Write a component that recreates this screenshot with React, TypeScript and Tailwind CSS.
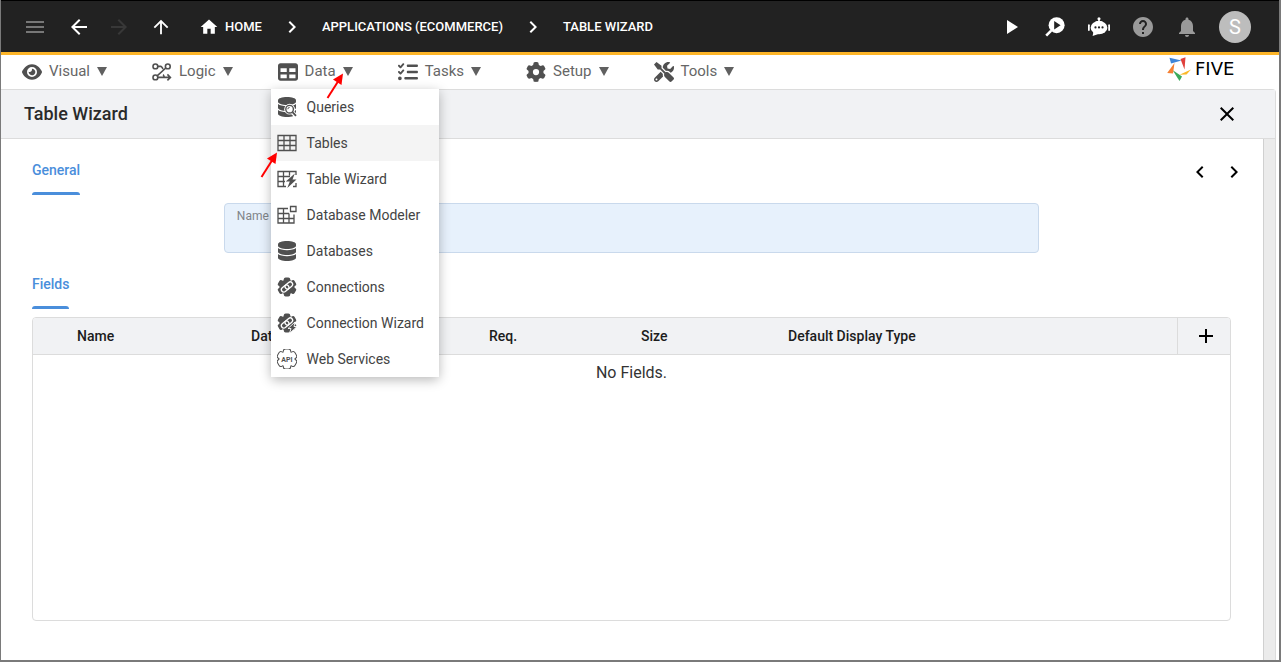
import React from "react";
import {
  MdAdd,
  MdArrowBack,
  MdArrowForward,
  MdArrowUpward,
  MdChevronLeft,
  MdChevronRight,
  MdClose,
  MdHelp,
  MdHome,
  MdMenu,
  MdNotifications,
  MdPlayArrow,
} from "react-icons/md";
import { FaEye, FaGear, FaListCheck, FaTable } from "react-icons/fa6";
import { FaTools } from "react-icons/fa";

const Icon = ({
  children,
  className = "size-5",
}: {
  children: React.ReactNode;
  className?: string;
}) => (
  <svg
    viewBox="0 0 20 20"
    className={`${className} shrink-0`}
    fill="none"
    stroke="currentColor"
    aria-hidden="true"
  >
    {children}
  </svg>
);

const LogicIcon = () => (
  <Icon>
    <g strokeWidth="1.6">
      <circle cx="3.4" cy="4.4" r="2.4" />
      <circle cx="15.8" cy="4.4" r="2.4" />
      <circle cx="3.4" cy="15.4" r="2.4" />
      <path d="M5.800 4.400h3c1.500 0 1.200 2.200 2.600 2.200M13.800 6l-8.400 7.600M5.800 15.400H18M11 12.600c1 .6.800 2.600 2 2.800M15.400 12.400l3 3-3 3" />
    </g>
  </Icon>
);

const RunSearchIcon = () => (
  <Icon>
    <circle cx="11.6" cy="8.2" r="8" fill="currentColor" stroke="none" />
    <path d="M6.200 13.600 1.200 18.600" strokeWidth="2.600" />
    <path d="M9.200 4v8.400l6.400-4.200z" fill="#222" stroke="none" />
  </Icon>
);

const BotIcon = () => (
  <Icon className="size-[22px]">
    <g fill="currentColor" stroke="none">
      <ellipse cx="10" cy="10.6" rx="7.6" ry="6" />
      <path d="M5 14 4.200 18.200l6-2zM9.300 2.600h1.400V6H9.300z" />
      <circle cx="10" cy="2.6" r="1.400" />
      <path d="M6.500 6c0-1.800 7-1.800 7 0z" />
      <rect x="0" y="7.600" width="1.600" height="6" rx=".8" />
      <rect x="18.400" y="7.600" width="1.600" height="6" rx=".8" />
    </g>
    <g fill="#222" stroke="none">
      <circle cx="6.800" cy="10.400" r="1" />
      <circle cx="10" cy="10.400" r="1" />
      <circle cx="13.200" cy="10.400" r="1" />
    </g>
  </Icon>
);

const Cylinder = () => (
  <g fill="currentColor" stroke="none">
    <path d="M1 3.200C1 1.300 5 0 10 0s9 1.300 9 3.200v1.600C19 6.700 15 8 10 8S1 6.700 1 4.800z" />
    <path d="M1 7c1.600 1.400 5 2.200 9 2.200S17.400 8.400 19 7v3.800c0 1.900-4 3.200-9 3.200s-9-1.300-9-3.200z" />
    <path d="M1 13c1.600 1.400 5 2.200 9 2.200s7.400-.8 9-2.200v3.800c0 1.900-4 3.200-9 3.200s-9-1.300-9-3.200z" />
  </g>
);

const DatabaseIcon = () => (
  <Icon>
    <Cylinder />
  </Icon>
);

const QueriesIcon = () => (
  <Icon>
    <Cylinder />
    <circle cx="12.600" cy="12.200" r="5.400" fill="#fff" stroke="none" />
    <path d="m15.500 15.500 4 4" stroke="#fff" strokeWidth="4" />
    <circle cx="12.600" cy="12.200" r="3.800" strokeWidth="1.400" />
    <path d="m15.500 15.200 3.500 3.600" strokeWidth="1.800" />
    <path d="M10.800 12.200a1.800 1.800 0 0 1 1.800-1.800" strokeWidth="1" />
  </Icon>
);

const TablesIcon = () => (
  <Icon>
    <path
      d="M1 2.500h18v15H1zM1 7.500h18M1 12.500h18M7 2.500v15M13 2.500v15"
      strokeWidth="1.300"
    />
  </Icon>
);

const TableWizardIcon = () => (
  <Icon>
    <path
      d="M19 6V2.500H1v15h8M1 7.500h12M1 12.500h7M6.500 2.500v15M12.500 2.500v4M19 14v3.500h-3"
      strokeWidth="1.300"
    />
    <path
      d="m17.800 4.500-9 8h4l-2.500 6.500 9.200-8.500h-4z"
      fill="currentColor"
      stroke="none"
    />
  </Icon>
);

const ModelerIcon = () => (
  <Icon>
    <path
      d="M11 3.500H1v14.500h16V9.500M1 8.500h11M1 13.500h16M6.500 3.500v14.500M12 8.500v9.500"
      strokeWidth="1.300"
    />
    <path d="M13.500 1.500H19v5h-5.500z" strokeWidth="1.300" />
  </Icon>
);

const GearShape = () => (
  <>
    <circle cx="10" cy="10" r="7.600" />
    <rect x="6.800" y=".4" width="6.400" height="19.200" rx="1.800" />
    <rect
      x="6.800"
      y=".4"
      width="6.400"
      height="19.200"
      rx="1.800"
      transform="rotate(60 10 10)"
    />
    <rect
      x="6.800"
      y=".4"
      width="6.400"
      height="19.200"
      rx="1.800"
      transform="rotate(120 10 10)"
    />
  </>
);

const ChainLink = () => (
  <g stroke="#fff" strokeWidth="1.300" transform="rotate(-40 10 10)">
    <rect x="3.400" y="7.600" width="8.400" height="4.800" rx="2.400" />
    <rect x="8.200" y="7.600" width="8.400" height="4.800" rx="2.400" />
  </g>
);

const ConnectionsIcon = () => (
  <Icon>
    <g fill="currentColor" stroke="none">
      <GearShape />
    </g>
    <ChainLink />
  </Icon>
);

const ConnectionWizardIcon = () => (
  <Icon>
    <g fill="currentColor" stroke="none">
      <GearShape />
    </g>
    <ChainLink />
    <path
      d="m18 9-7 6.500h3L12.500 20.500l7.500-7h-3z"
      fill="currentColor"
      stroke="#fff"
      strokeWidth=".9"
    />
  </Icon>
);

const WebServicesIcon = () => (
  <Icon>
    <g strokeWidth="2">
      <GearShape />
    </g>
    <g fill="#fff" stroke="none">
      <GearShape />
    </g>
    <text
      x="10"
      y="12.500"
      textAnchor="middle"
      fontSize="7"
      fontWeight="700"
      fill="currentColor"
      stroke="none"
    >
      API
    </text>
  </Icon>
);

const Logo = () => (
  <a href="#five" aria-label="Five" className="mt-0.5 flex w-[88px] items-center gap-1">
    <svg viewBox="0 0 24 24" className="size-6" aria-hidden="true">
      <path d="M2.500.8 14.500 3.600 4 6.600z" fill="#3f86d8" />
      <path d="M13.500 2 18.500.3 17.500 12.500z" fill="#e0403c" />
      <path d="m24 12.500-4.500 5-7 .3z" fill="#fbb829" />
      <path d="M5.500 13 15 19.500 12.500 24z" fill="#3aaa5a" />
      <path d="M7.500 6 6 16.500.2 16z" fill="#f58033" />
    </svg>
    <span className="font-['DejaVu_Sans',sans-serif] text-lg leading-6 text-black">
      FIVE
    </span>
  </a>
);

const RedArrow = ({ className }: { className: string }) => (
  <svg
    viewBox="0 0 18 26"
    className={`pointer-events-none absolute z-20 h-[26px] w-[18px] ${className}`}
    aria-hidden="true"
  >
    <path d="M1.500 25 12 8.500" stroke="#f00" strokeWidth="2" />
    <path d="M17 .5 15.500 12 7 6.500z" fill="#f00" />
  </svg>
);

const dataItems = [
  { label: "Queries", icon: <QueriesIcon /> },
  { label: "Tables", icon: <TablesIcon />, active: true },
  { label: "Table Wizard", icon: <TableWizardIcon /> },
  { label: "Database Modeler", icon: <ModelerIcon /> },
  { label: "Databases", icon: <DatabaseIcon /> },
  { label: "Connections", icon: <ConnectionsIcon /> },
  { label: "Connection Wizard", icon: <ConnectionWizardIcon /> },
  { label: "Web Services", icon: <WebServicesIcon /> },
];

const DataMenu = () => (
  <ul className="absolute top-[34px] -left-[7px] z-10 w-[168px] rounded-b-sm bg-white shadow-[0_3px_12px_rgba(0,0,0,0.28)]">
    {dataItems.map((item) => (
      <li key={item.label} className="relative">
        <button
          type="button"
          className={`flex h-9 w-full items-center gap-2.5 pl-1.5 text-sm whitespace-nowrap text-[#444] ${
            item.active ? "bg-[#f4f4f4]" : "bg-white"
          }`}
        >
          <span className="text-[#505050]">{item.icon}</span>
          {item.label}
        </button>
        {item.active && <RedArrow className="top-[27px] -left-[11px]" />}
      </li>
    ))}
  </ul>
);

const menus = [
  { label: "Visual", icon: <FaEye className="size-5" /> },
  { label: "Logic", icon: <LogicIcon /> },
  { label: "Data", icon: <FaTable className="size-5" />, open: true },
  { label: "Tasks", icon: <FaListCheck className="size-5" /> },
  { label: "Setup", icon: <FaGear className="size-5" /> },
  { label: "Tools", icon: <FaTools className="size-5" /> },
];

const MenuBar = () => (
  <nav className="flex h-[34px] items-start justify-between pr-6 pl-[21px]">
    <ul className="flex gap-[45px]">
      {menus.map((menu) => (
        <li key={menu.label} className="relative">
          <button
            type="button"
            className="flex h-[33px] items-center gap-[7px] text-[15px] text-[#666]"
          >
            <span className="text-[#505050]">{menu.icon}</span>
            {menu.label}
            <svg viewBox="0 0 10 9" className="h-[9px] w-2.5" aria-hidden="true">
              <path d="M0 0h10L5 9z" fill="#606060" />
            </svg>
          </button>
          {menu.open && <DataMenu />}
          {menu.open && <RedArrow className="top-[18px] left-12" />}
        </li>
      ))}
    </ul>
    <Logo />
  </nav>
);

const TopBar = () => (
  <header className="flex h-[55px] items-center justify-between border-t border-b-3 border-t-black border-b-[#fdb528] bg-[#222] pr-7 pl-3 text-white">
    <div className="flex items-center">
      <button type="button" aria-label="Menu" className="flex w-11 justify-center text-[#777]">
        <MdMenu size={24} />
      </button>
      <button type="button" aria-label="Back" className="flex w-11 justify-center">
        <MdArrowBack size={24} />
      </button>
      <button type="button" aria-label="Forward" className="flex w-9 justify-center text-[#383838]">
        <MdArrowForward size={24} />
      </button>
      <button type="button" aria-label="Up" className="flex w-12 justify-center">
        <MdArrowUpward size={22} />
      </button>
      <nav className="ml-3.5 flex items-center gap-[18px] text-[13px] font-medium whitespace-nowrap">
        <a href="#home" className="flex items-center gap-1.5">
          <MdHome size={20} />
          HOME
        </a>
        <MdChevronRight size={24} />
        <a href="#applications">APPLICATIONS (ECOMMERCE)</a>
        <MdChevronRight size={24} />
        <a href="#table-wizard">TABLE WIZARD</a>
      </nav>
    </div>
    <div className="flex items-center">
      <button type="button" aria-label="Run" className="flex w-11 justify-center">
        <MdPlayArrow size={24} />
      </button>
      <button type="button" aria-label="Inspect" className="flex w-11 justify-center">
        <RunSearchIcon />
      </button>
      <button type="button" aria-label="Assistant" className="flex w-11 justify-center">
        <BotIcon />
      </button>
      <button type="button" aria-label="Help" className="flex w-11 justify-center text-[#9a9a9a]">
        <MdHelp size={24} />
      </button>
      <button type="button" aria-label="Notifications" className="flex w-11 justify-center text-[#9a9a9a]">
        <MdNotifications size={24} />
      </button>
      <button
        type="button"
        className="ml-2.5 size-8 rounded-full bg-[#bdbdbd] text-xl leading-8"
      >
        S
      </button>
    </div>
  </header>
);

const SectionTab = ({ children }: { children: React.ReactNode }) => (
  <h2 className="w-fit text-sm leading-5 font-medium text-[#4a8edb]">
    {children}
    <span className="mt-3 block h-[3px] rounded-t-sm bg-[#4a8edb]" />
  </h2>
);

const FieldsTable = () => (
  <div className="mt-2 mb-[39px] flex-1 overflow-hidden rounded-sm border border-[#dcdcdc]">
    <table className="w-full table-fixed text-left">
      <thead className="bg-[#f1f2f4] text-sm text-[#1c1c1c]">
        <tr className="h-9 border-b border-[#dcdcdc]">
          <th className="w-[218px] pl-11 font-medium">Name</th>
          <th className="w-[238px] font-medium">Data Type</th>
          <th className="w-[152px] font-medium">Req.</th>
          <th className="w-[147px] font-medium">Size</th>
          <th className="font-medium">Default Display Type</th>
          <th className="w-[53px] border-l border-[#dcdcdc] pl-1">
            <button type="button" aria-label="Add field" className="mx-auto flex text-black">
              <MdAdd size={24} />
            </button>
          </th>
        </tr>
      </thead>
      <tbody>
        <tr>
          <td colSpan={6} className="pt-1.5 text-center text-[#333]">
            No Fields.
          </td>
        </tr>
      </tbody>
    </table>
  </div>
);

const App = () => {
  return (
    <div className="flex min-h-screen flex-col border-r-2 border-b-2 border-l border-[#7a7a7a] bg-white font-[Roboto,sans-serif]">
      <TopBar />
      <MenuBar />
      <main className="mr-[3px] flex flex-1 flex-col rounded-tr-sm border-t border-r border-[#dcdcdc]">
        <div className="flex h-[49px] items-center justify-between border-b border-[#dcdcdc] bg-[#f1f2f4] pr-9 pl-[23px]">
          <h1 className="text-lg font-medium text-[#2a2a2a]">Table Wizard</h1>
          <button type="button" aria-label="Close" className="text-black">
            <MdClose size={24} />
          </button>
        </div>
        <div className="flex flex-1">
          <div className="flex flex-1 flex-col pr-8 pl-[31px]">
            <div className="mt-[21px] flex items-start justify-between">
              <SectionTab>General</SectionTab>
              <div className="-mr-[15px] flex gap-2.5 text-black">
                <button type="button" aria-label="Previous">
                  <MdChevronLeft size={24} />
                </button>
                <button type="button" aria-label="Next">
                  <MdChevronRight size={24} />
                </button>
              </div>
            </div>
            <div className="mx-auto mt-2 flex h-[50px] w-[68%] flex-col rounded-sm border border-[#c9d9ec] bg-[#e7f1fc] px-3 pt-1">
              <label htmlFor="name" className="text-xs leading-4 text-[#808489]">
                Name
              </label>
              <input
                id="name"
                type="text"
                className="w-full bg-transparent text-base text-[#222] outline-none"
              />
            </div>
            <div className="mt-[21px]">
              <SectionTab>Fields</SectionTab>
            </div>
            <FieldsTable />
          </div>
          <div className="w-3 border-l border-[#d0d0d0] bg-[#ebebeb]" />
        </div>
      </main>
    </div>
  );
};

export default App;
